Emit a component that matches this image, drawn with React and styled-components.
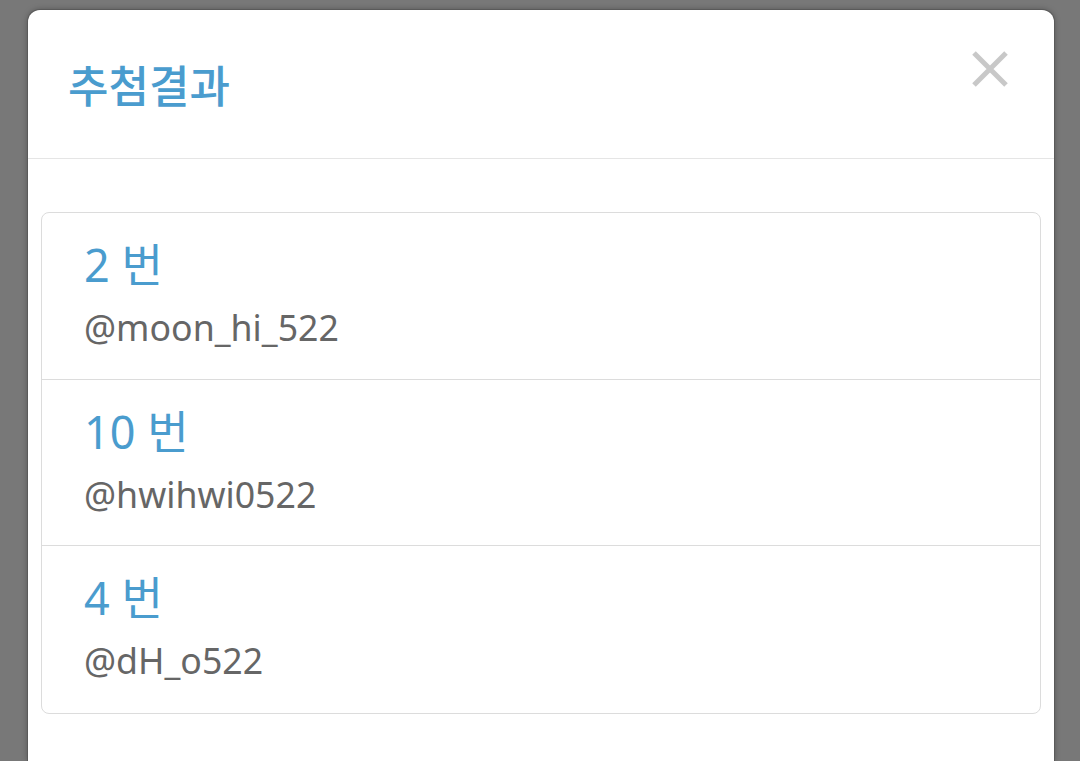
import React from "react";
import styled, { createGlobalStyle } from "styled-components";

const Global = createGlobalStyle`
  html, body { margin: 0; padding: 0; background: #787878; }
  body { font-family: "Noto Sans", "Noto Sans CJK KR", sans-serif; overflow: hidden; }
`;

const Page = styled.div`
  height: 761px;
  padding: 10px 26px 0 28px;
  box-sizing: border-box;
`;

const Modal = styled.div`
  background: #fff;
  border-radius: 12px 12px 0 0;
  height: 100%;
  box-shadow: 0 0 0 1px #5a5a5a, 0 0 6px rgba(0, 0, 0, 0.35);
  display: flex;
  flex-direction: column;
`;

const Header = styled.div`
  height: 149px;
  box-sizing: border-box;
  border-bottom: 1px solid #e5e5e5;
  display: flex;
  align-items: center;
  justify-content: space-between;
  padding: 0 46px 0 40px;
`;

const Title = styled.h4`
  margin: 0;
  font-family: "Noto Sans CJK KR", sans-serif;
  font-weight: 500;
  font-size: 44px;
  color: #4a9cce;
  line-height: 1;
`;

const Close = styled.button`
  border: 0;
  background: none;
  padding: 0;
  width: 36px;
  height: 36px;
  cursor: pointer;
  display: flex;
  align-self: flex-start;
  margin-top: 41px;
`;

const Body = styled.div`
  padding: 53px 13px 0 13px;
`;

const List = styled.div`
  border: 1px solid #dcdcdc;
  border-radius: 8px;
  overflow: hidden;
`;

const Item = styled.div`
  height: ${(p) => (p.$last ? 168 : 166)}px;
  box-sizing: border-box;
  padding: 24px 42px 0;
  border-top: ${(p) => (p.$first ? "none" : "1px solid #dcdcdc")};
`;

const Number = styled.div`
  font-size: 45px;
  line-height: 56px;
  color: #4a9cce;
`;

const Handle = styled.div`
  font-size: 35.7px;
  line-height: 48px;
  margin-top: 10px;
  color: #666;
`;

const results = [
  { n: "2 번", h: "@moon_hi_522" },
  { n: "10 번", h: "@hwihwi0522" },
  { n: "4 번", h: "@dH_o522" },
];

export default function App() {
  return (
    <>
      <Global />
      <Page>
        <Modal>
          <Header>
            <Title>추첨결과</Title>
            <Close aria-label="close">
              <svg width="36" height="36" viewBox="0 0 36 36">
                <path d="M2 2 L34 34 M34 2 L2 34" stroke="#c8c8c8" strokeWidth="5" />
              </svg>
            </Close>
          </Header>
          <Body>
            <List>
              {results.map((r, i) => (
                <Item key={i} $first={i === 0} $last={i === results.length - 1}>
                  <Number>{r.n}</Number>
                  <Handle>{r.h}</Handle>
                </Item>
              ))}
            </List>
          </Body>
        </Modal>
      </Page>
    </>
  );
}
